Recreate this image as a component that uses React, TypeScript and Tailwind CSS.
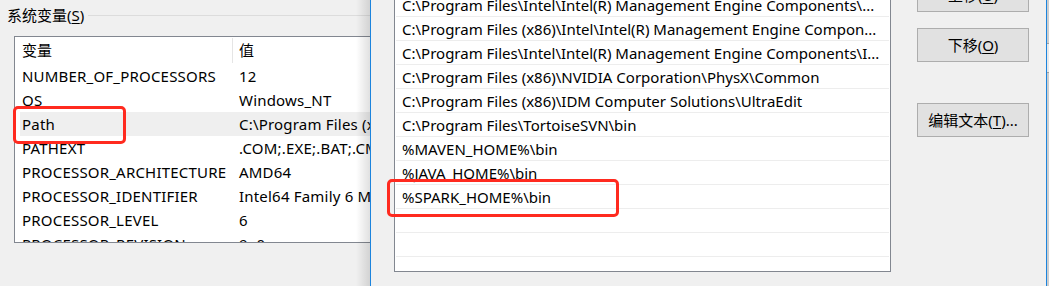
import React from "react";

const font = "font-['Noto_Sans','Noto_Sans_CJK_SC',sans-serif]";

const leftRows: [string, string][] = [
  ["NUMBER_OF_PROCESSORS", "12"],
  ["OS", "Windows_NT"],
  ["Path", "C:\\Program Files (x86)\\Common Files\\Oracle\\Java\\javapath"],
  ["PATHEXT", ".COM;.EXE;.BAT;.CMD;.VBS;.VBE;.JS;.JSE;.WSF;.WSH;.MSC"],
  ["PROCESSOR_ARCHITECTURE", "AMD64"],
  ["PROCESSOR_IDENTIFIER", "Intel64 Family 6 Model 158 Stepping 10, GenuineIntel"],
  ["PROCESSOR_LEVEL", "6"],
  ["PROCESSOR_REVISION", "9e0a"],
];

const rightRows: string[] = [
  "C:\\Program Files\\Intel\\Intel(R) Management Engine Components\\...",
  "C:\\Program Files (x86)\\Intel\\Intel(R) Management Engine Compon...",
  "C:\\Program Files\\Intel\\Intel(R) Management Engine Components\\I...",
  "C:\\Program Files (x86)\\NVIDIA Corporation\\PhysX\\Common",
  "C:\\Program Files (x86)\\IDM Computer Solutions\\UltraEdit",
  "C:\\Program Files\\TortoiseSVN\\bin",
  "%MAVEN_HOME%\\bin",
  "%JAVA_HOME%\\bin",
  "%SPARK_HOME%\\bin",
  "",
  "",
  "",
];

function Btn({ children }: { children: React.ReactNode }) {
  return (
    <div className="flex h-[34px] w-[112px] items-center justify-center border border-[#adadad] bg-[#e1e1e1] text-[15px] text-black">
      {children}
    </div>
  );
}

export default function App() {
  return (
    <div className={`relative flex h-[286px] w-[1049px] overflow-hidden bg-[#f0f0f0] text-black ${font}`}>
      {/* Left window */}
      <div className="relative h-full w-[370px] shrink-0 overflow-hidden bg-[#f0f0f0]">
        <div className="flex items-center pt-[5px] pl-[7px]">
          <span className="text-[15px] leading-[20px] whitespace-nowrap">
            系统变量(<span className="underline underline-offset-2">S</span>)
          </span>
          <div className="ml-[4px] h-px flex-1 bg-[#dcdcdc]" />
        </div>
        <div className="ml-[14px] mt-[11px] h-[207px] w-[420px] overflow-hidden border border-[#828790] bg-white">
          <div className="flex h-[27px] items-center text-[15px]">
            <div className="w-[217px] pl-[7px]">变量</div>
            <div className="h-[25px] w-px bg-[#e5e5e5]" />
            <div className="pl-[6px]">值</div>
          </div>
          {leftRows.map(([k, v], i) => (
            <div
              key={k}
              className={`flex h-[24px] items-center whitespace-nowrap text-[15px] tracking-[0.2px] ${i === 2 ? "ml-[5px] bg-[#efefef]" : ""}`}
            >
              <div className={`${i === 2 ? "w-[213px] pl-[2px]" : "w-[218px] pl-[7px]"} shrink-0`}>{k}</div>
              <div className="w-[137px] shrink-0 overflow-hidden pl-[6px]">{v}</div>
            </div>
          ))}
        </div>
        <div className="pointer-events-none absolute right-0 top-0 h-full w-[14px] bg-gradient-to-r from-transparent to-[rgba(0,0,0,0.12)]" />
      </div>

      <div className="h-full w-px shrink-0 bg-[#1c84dd]" />

      {/* Right dialog */}
      <div className="flex h-full w-[675px] shrink-0 bg-[#f0f0f0]">
        <div className="-mt-[8px] ml-[23px] h-[280px] w-[497px] shrink-0 overflow-hidden border border-[#828790] bg-white">
          {rightRows.map((t, i) => (
            <div
              key={i}
              className="mx-[1px] flex h-[24px] items-center overflow-hidden whitespace-nowrap border-b border-[#ededed] pl-[6px] pt-[2px] text-[15px]"
            >
              {t}
            </div>
          ))}
        </div>
        <div className="-mt-[22px] ml-[26px] flex flex-col">
          <Btn>
            上移(<span className="underline underline-offset-2">U</span>)
          </Btn>
          <div className="mt-[16px]">
            <Btn>
              下移(<span className="underline underline-offset-2">O</span>)
            </Btn>
          </div>
          <div className="mt-[41px]">
            <Btn>
              编辑文本(<span className="underline underline-offset-2">T</span>)...
            </Btn>
          </div>
        </div>
      </div>

      <div className="h-full w-px shrink-0 bg-[#1c84dd]" />
      <div className="flex h-full w-[2px] shrink-0 flex-col bg-[#cdcdcd]">
        <div className="mt-[43px] h-[30px] border-y border-[#a0a0a0] bg-[#e8e8e8]" />
      </div>

      {/* Annotations */}
      <div className="pointer-events-none absolute left-[13px] top-[106px] h-[38px] w-[113px] rounded-[5px] border-[3px] border-[#ff2a1f]" />
      <div className="pointer-events-none absolute left-[387px] top-[179px] h-[38px] w-[232px] rounded-[5px] border-[3px] border-[#ff2a1f]" />
    </div>
  );
}
